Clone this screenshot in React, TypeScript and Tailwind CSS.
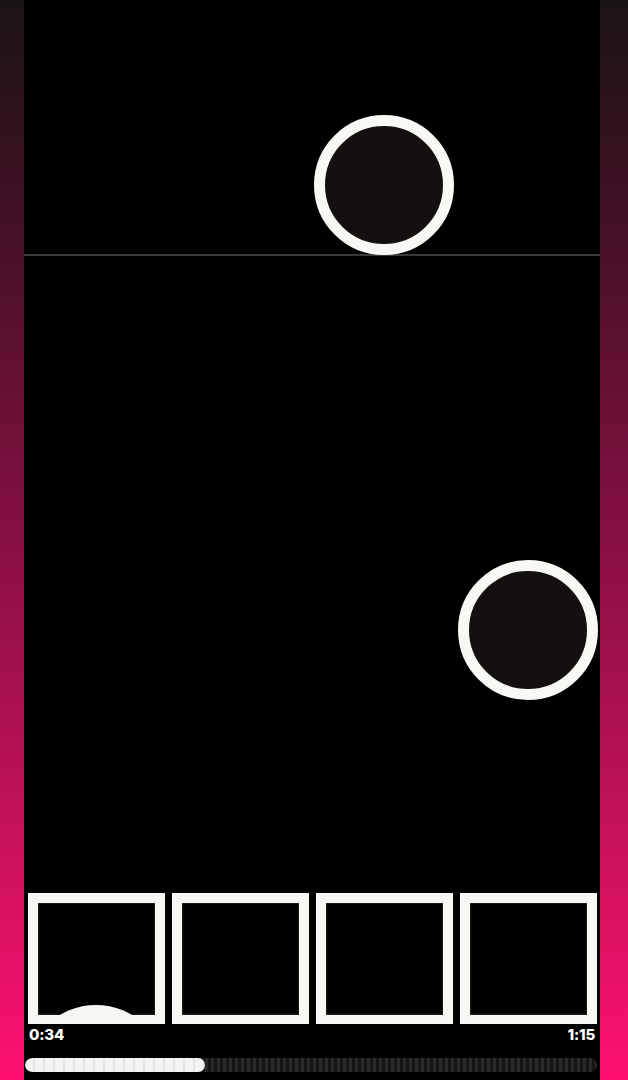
import React from "react";

function Ring({ className }: { className: string }) {
  return (
    <div
      className={`absolute h-[140px] w-[140px] rounded-full border-[11px] border-[#f8f8f4] bg-[#141010] ${className}`}
    />
  );
}

function Thumb({ children }: { children?: React.ReactNode }) {
  return (
    <div className="h-[131px] w-[137px] border-x-[10px] border-t-[10px] border-b-[9px] border-[#f7f7f3] bg-black">
      <div className="relative h-full w-full overflow-hidden bg-black shadow-[inset_0_0_2px_rgba(120,120,120,0.8)]">
        {children}
      </div>
    </div>
  );
}

export default function App() {
  return (
    <div
      className="flex h-[1080px] w-[628px] overflow-hidden bg-[linear-gradient(to_bottom,#1a1416_0%,#4a1028_24%,#8c1043_52%,#c8125a_78%,#ff1070_100%)]"
      style={{ fontFamily: "Inter, 'Liberation Sans', sans-serif" }}
    >
      <div className="w-[24px] shrink-0" />
      <div className="relative flex flex-1 flex-col bg-black">
        <div className="h-[256px] shrink-0 border-b-2 border-[#3a3a3a]" />
        <Ring className="left-[290px] top-[115px]" />
        <Ring className="left-[434px] top-[560px]" />
        <div className="flex-1" />
        <div className="flex gap-[7px] pl-[4px] pr-[3px]">
          <Thumb>
            <div className="absolute left-[-12px] top-[102px] h-[140px] w-[140px] rounded-full bg-[#f7f7f3]" />
          </Thumb>
          <Thumb />
          <Thumb />
          <Thumb />
        </div>
        <div className="mt-[3px] flex h-[16px] items-center justify-between px-[5px] text-[15px] font-extrabold leading-[16px] tracking-[-0.2px] text-white">
          <span>0:34</span>
          <span>1:15</span>
        </div>
        <div className="ml-[1px] mr-[3px] mt-[15px] flex h-[14px] overflow-hidden rounded-full bg-[repeating-linear-gradient(90deg,#2a2a2a_0px,#2a2a2a_3px,#161616_3px,#161616_6px)]">
          <div className="h-full w-[180px] rounded-full bg-[repeating-linear-gradient(90deg,#f4f4f4_0px,#f4f4f4_8px,#e4e4e4_8px,#e4e4e4_10px)]" />
        </div>
        <div className="h-[8px] shrink-0" />
      </div>
      <div className="w-[28px] shrink-0" />
    </div>
  );
}
